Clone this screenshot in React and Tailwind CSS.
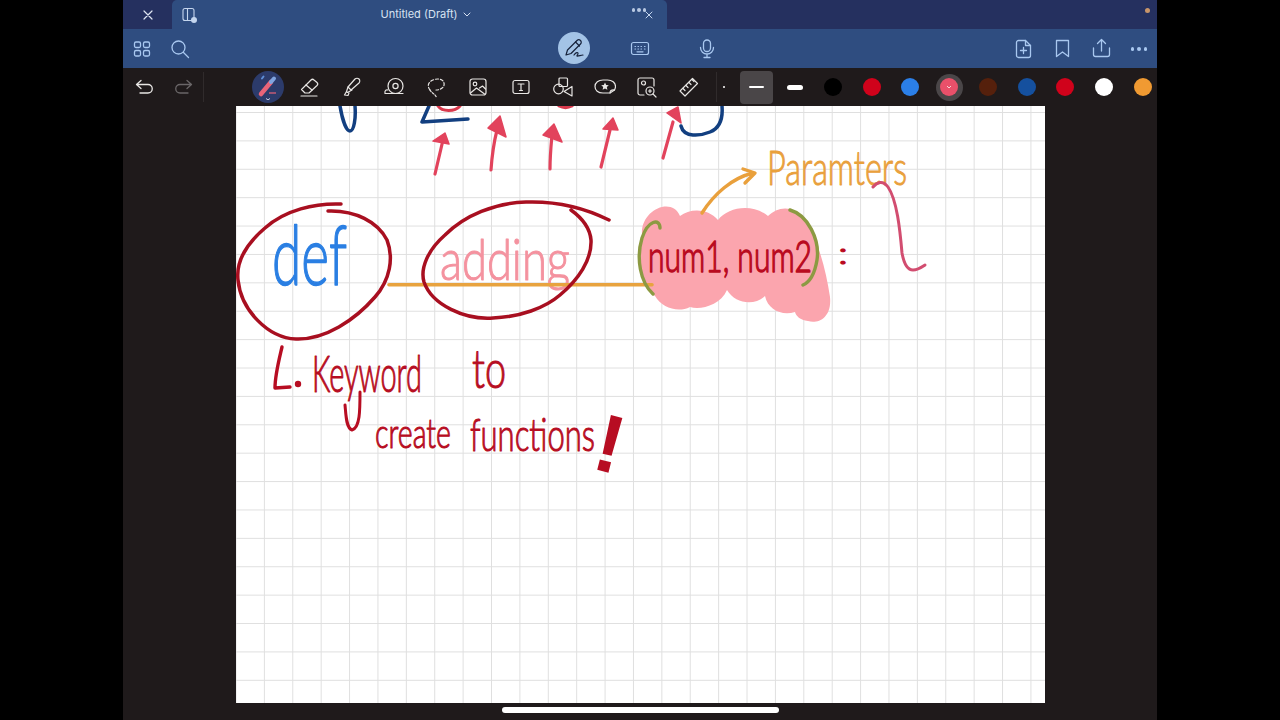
import React from "react";

const ink = { fill: "none", strokeLinecap: "round", strokeLinejoin: "round" };

function I({ w = 24, h = 24, c = "#a9c8f0", s = 1.6, children }) {
  return (
    <svg width={w} height={h} viewBox={`0 0 ${w} ${h}`} fill="none" stroke={c} strokeWidth={s} strokeLinecap="round" strokeLinejoin="round">
      {children}
    </svg>
  );
}

const W = "#e8e6e4";

function ToolIcon({ children }) {
  return <div className="w-[42.1px] h-[26px] flex items-center justify-center shrink-0">{children}</div>;
}

function Swatch({ color, ring }) {
  return (
    <div className="w-[38.75px] flex items-center justify-center shrink-0">
      {ring ? (
        <div className="w-[27px] h-[27px] rounded-full bg-[#4a4648] flex items-center justify-center">
          <div className="w-[18px] h-[18px] rounded-full flex items-center justify-center" style={{ background: color }}>
            <svg width="6" height="4" viewBox="0 0 6 4" fill="none" stroke="#f5d5d8" strokeWidth="1"><path d="M1 1l2 2 2-2" /></svg>
          </div>
        </div>
      ) : (
        <div className="w-[18px] h-[18px] rounded-full" style={{ background: color }} />
      )}
    </div>
  );
}

function Hand({ x, y, w, fs, sy, color, sw = 0.6, children }) {
  return (
    <text
      transform={`translate(${x} ${y}) scale(1 ${sy})`}
      textLength={w}
      lengthAdjust="spacingAndGlyphs"
      fontSize={fs}
      fill={color}
      stroke={color}
      strokeWidth={sw}
      strokeLinejoin="round"
      style={{ fontFamily: "Lato, 'Noto Sans', sans-serif", fontWeight: 300 }}
    >
      {children}
    </text>
  );
}

function Ink() {
  const red = "#b70d22";
  return (
    <svg className="absolute inset-0" width="809" height="597" viewBox="236 106 809 597">
      <path d="M642 235C640 210 672 196 680 216C690 208 708 208 718 220C728 207 752 203 768 216C778 206 795 204 806 222C818 240 826 270 830 297C832 318 818 324 808 321C800 320 796 316 795 312C782 316 768 310 765 296C755 306 735 304 727 290C720 306 700 310 690 307C678 313 662 308 655 296C640 285 636 260 642 235Z" fill="#fba5ae" />

      <g {...ink} stroke="#123f80" strokeWidth="3.5">
        <path d="M340 106C342 118 346 131 350 131C354 131 356 118 355 106" />
        <path d="M429 106L422 122L468 119" />
        <path d="M722 106C723 118 720 128 710 132C700 136 684 138 681 126" />
      </g>
      <path d="M438 106C442 112 455 112 460 106M559 106C563 108 568 108 572 106" {...ink} stroke="#d93a4d" strokeWidth="3" />
      <g {...ink} stroke="#e2435c" strokeWidth="3.2">
        <path d="M435 174L443 140" />
        <path d="M491 170C492 155 494 142 497 130" />
        <path d="M550 169C550 156 551 146 552 135" />
        <path d="M601 167L610 130" />
        <path d="M663 158L673 122" />
      </g>
      <g fill="#e2435c" stroke="#e2435c" strokeWidth="1.5" strokeLinejoin="round">
        <path d="M445 133L433 141L449 144Z" />
        <path d="M500 116L488 128L506 137Z" />
        <path d="M554 124L543 135L562 142Z" />
        <path d="M613 118L603 129L618 130Z" />
        <path d="M678 107L667 113L681 123Z" />
      </g>

      <Hand x={272} y={285} w={75} fs={46} sy={1.8} color="#2a7fe3" sw={0.8}>def</Hand>
      <Hand x={440} y={280} w={130} fs={37} sy={1.55} color="#f4929f" sw={0.7}>adding</Hand>

      <path d="M389 284.700H652" {...ink} stroke="#e8a33f" strokeWidth="3.600" />

      <g {...ink} stroke="#a80f20" strokeWidth="3.500">
        <path d="M341 204C315 203 285 210 265 228C245 245 236 262 238 280C241 310 268 338 296 339C325 340 355 320 375 297C390 280 394 258 387 240C378 222 355 210 328 211" />
        <path d="M609 220C585 208 555 201 526 202C495 203 465 215 445 235C428 250 420 268 424 282C432 305 465 320 493 318C520 317 545 308 560 295C578 280 592 260 591 240C590 228 582 218 571 210" />
      </g>

      <path d="M660 228C660 218 648 220 642 238C636 258 640 282 653 294M790 210C808 215 820 240 817 260C815 272 810 282 803 285" {...ink} stroke="#8c9a42" strokeWidth="3.400" />
      <Hand x={648} y={272} w={164} fs={30} sy={1.45} color="#b90a20" sw={1}>num1, num2</Hand>
      <Hand x={838} y={264} w={10} fs={30} sy={1} color="#b90a20" sw={1.2}>:</Hand>

      <path d="M702 213C714 194 732 178 753 173M743 169L755 173L745 183" {...ink} stroke="#e9a03c" strokeWidth="3.400" />
      <Hand x={767} y={185} w={140} fs={29} sy={1.65} color="#e9a03c">Paramters</Hand>

      <path d="M873 187C877 182 883 180 888 187C897 200 900 230 902 253C904 264 908 270 913 270C918 270 922 267 925 265" {...ink} stroke="#d24d70" strokeWidth="3" />

      <path d="M282 347C279 360 275 375 275 388L290 387" {...ink} stroke={red} strokeWidth="3.400" />
      <circle cx="298" cy="384" r="3.200" fill={red} />
      <path d="M360 392C360 410 360 428 352 430C346 428 346 415 345 405" {...ink} stroke={red} strokeWidth="3" />
      <Hand x={312} y={392} w={110} fs={28} sy={1.8} color={red}>Keyword</Hand>
      <Hand x={472} y={388} w={34} fs={30} sy={1.8} color={red}>to</Hand>
      <Hand x={375} y={448} w={76} fs={24} sy={1.75} color={red}>create</Hand>
      <Hand x={470} y={451} w={125} fs={26} sy={1.75} color={red}>functions</Hand>
      <text x="597" y="472" fontSize="82" fill={red} transform="rotate(14 610 440)" style={{ fontFamily: "'Liberation Sans', sans-serif", fontWeight: 700 }}>!</text>
    </svg>
  );
}

export default function App() {
  return (
    <div className="w-[1280px] h-[720px] bg-black flex justify-center overflow-hidden">
      <div className="w-[1034px] h-full bg-[#1f1a1b] flex flex-col">
        {/* title bar */}
        <div className="h-[29px] bg-[#25305f] flex shrink-0 relative">
          <div className="w-[49px] flex items-center justify-center">
            <I w={12} h={12} c="#dfe4f0" s={1.200}><path d="M2 2l8 8M10 2l-8 8" /></I>
          </div>
          <div className="w-[495px] bg-[#2f4d80] rounded-t-[5px] flex items-center relative">
            <div className="ml-[9px] mt-[1px] relative z-10">
              <I w={16} h={16} c="#c5d6ee" s={1.100}>
                <rect x="2" y="1.500" width="11" height="12" rx="2" />
                <path d="M6.500 1.500v12" />
              </I>
              <span className="absolute right-[0px] bottom-[0px] w-[6px] h-[6px] rounded-full bg-[#c5d6ee]" />
            </div>
            <div className="absolute left-0 right-0 flex items-center justify-center gap-[5px] text-[11px] text-[#d7e2f2] pl-[12px] font-['Inter',sans-serif]">
              <span>Untitled (Draft)</span>
              <I w={8} h={6} c="#d7e2f2" s={1}><path d="M1 1l3 3 3-3" /></I>
            </div>
            <div className="absolute right-[21px] top-[8px] flex items-center gap-[2px]">
              <span className="w-[3.500px] h-[3.500px] rounded-full bg-[#b8c8e2]" />
              <span className="w-[3.500px] h-[3.500px] rounded-full bg-[#b8c8e2]" />
              <span className="w-[3.500px] h-[3.500px] rounded-full bg-[#b8c8e2]" />
            </div>
            <div className="absolute right-[14px] top-[11px]">
              <I w={8} h={8} c="#c5d6ee" s={1}><path d="M1 1l6 6M7 1l-6 6" /></I>
            </div>
          </div>
          <div className="absolute right-[7px] top-[8px] w-[5px] h-[5px] rounded-full bg-[#c8956a]" />
        </div>

        {/* blue toolbar */}
        <div className="h-[39px] bg-[#2f4d80] flex items-center relative shrink-0">
          <div className="ml-[10px]">
            <I w={18} h={18} s={1.300}>
              <rect x="1.500" y="2" width="6" height="5.500" rx="1.500" />
              <rect x="10.500" y="2" width="6" height="5.500" rx="1.500" />
              <rect x="1.500" y="10.500" width="6" height="5.500" rx="1.500" />
              <rect x="10.500" y="10.500" width="6" height="5.500" rx="1.500" />
            </I>
          </div>
          <div className="ml-[19px]">
            <I w={20} h={20} s={1.300}>
              <circle cx="8.500" cy="8.500" r="6.500" />
              <path d="M13.500 13.500l5 5" />
            </I>
          </div>
          <div className="absolute left-[435px] top-[3px] w-[32px] h-[32px] rounded-full bg-[#a3c3e6] flex items-center justify-center">
            <I w={22} h={22} c="#17233c" s={1.200}>
              <path d="M3 18l1.500-5L14 3.500c1-1 2.500-1 3.500 0s1 2.500 0 3.500L8 16.500z" />
              <path d="M12.500 5l4 4" />
              <path d="M11 18c2-3 4-3 4-1.500s-1.500 2-1 2.500 3-.5 6-1" />
            </I>
          </div>
          <div className="absolute left-[507px] top-[12px]">
            <I w={20} h={15} s={1.200}>
              <rect x="1.500" y="1.500" width="17" height="12" rx="2" />
              <path d="M5 5.500h.5M8 5.500h.5M11 5.500h.5M14.500 5.500h.5M5 8h.5M8 8h.5M11 8h.5M14.500 8h.5M7 10.800h6" />
            </I>
          </div>
          <div className="absolute left-[575px] top-[10px]">
            <I w={18} h={20} s={1.300}>
              <rect x="5.500" y="1" width="7" height="11.500" rx="3.500" />
              <path d="M2.500 8.500c0 4 3 6.500 6.500 6.500s6.500-2.500 6.500-6.500M9 15v3M6 18.500h6" />
            </I>
          </div>
          <div className="absolute right-[124px] top-[10px]">
            <I w={18} h={20} s={1.300}>
              <path d="M3.500 1.500h7l5 5v10a2 2 0 0 1-2 2h-10a2 2 0 0 1-2-2v-13a2 2 0 0 1 2-2z" />
              <path d="M10.500 1.500v5h5M8.500 8.500v6M5.500 11.500h6" />
            </I>
          </div>
          <div className="absolute right-[87px] top-[10px]">
            <I w={15} h={19} s={1.300}><path d="M1.500 1.500h12v16l-6-4.500-6 4.500z" /></I>
          </div>
          <div className="absolute right-[46px] top-[9px]">
            <I w={19} h={20} s={1.300}>
              <path d="M9.500 13V2M5.500 5.500l4-4 4 4" />
              <path d="M1.500 10v6.500a2 2 0 0 0 2 2h12a2 2 0 0 0 2-2V10" />
            </I>
          </div>
          <div className="absolute right-[10px] top-[18px] flex gap-[3px]">
            <span className="w-[3.500px] h-[3.500px] rounded-full bg-[#a9c8f0]" />
            <span className="w-[3.500px] h-[3.500px] rounded-full bg-[#a9c8f0]" />
            <span className="w-[3.500px] h-[3.500px] rounded-full bg-[#a9c8f0]" />
          </div>
        </div>

        {/* dark tool row */}
        <div className="h-[38px] flex items-center shrink-0">
          <div className="w-[81px] h-[30px] flex items-center pl-[12px] gap-[18px] border-r border-[#302b2c] shrink-0">
            <I w={20} h={16} c={W} s={1.300}><path d="M6 1.500L1.500 5.500 6 9.500M1.500 5.500H13a4 4 0 0 1 0 8.500H5" /></I>
            <I w={20} h={16} c="#6a6668" s={1.300}><path d="M14 1.500l4.500 4-4.500 4M18.500 5.500H7a4 4 0 0 0 0 8.500h8" /></I>
          </div>
          <div className="ml-[48px] flex w-[32px] h-[32px] rounded-full bg-[#2c3b6b] items-center justify-center relative shrink-0">
            <svg width="24" height="28" viewBox="0 0 24 28" fill="none">
              <path d="M6 5.500l1.500-2" stroke="#5f8fd8" strokeWidth="2" strokeLinecap="round" />
              <path d="M5 21L15 9" stroke="#e96478" strokeWidth="4.500" strokeLinecap="round" />
              <path d="M15 9l3-3.500" stroke="#7fa4e0" strokeWidth="4" strokeLinecap="round" />
              <path d="M13 20h7" stroke="#e96478" strokeWidth="1.200" />
              <path d="M10 25.500l2 1.300 2-1.300" stroke="#d7dcec" strokeWidth="0.900" />
            </svg>
          </div>
          <div className="flex items-center ml-[5px] shrink-0">
            <ToolIcon>
              <I w={22} h={22} c={W} s={1.200}>
                <path d="M2.500 13.500L12 4c1-1 2-1 3 0l3 2.500c1 1 1 2 0 3L10 17H6z" />
                <path d="M7 9l6 5M2 20h16" />
              </I>
            </ToolIcon>
            <ToolIcon>
              <I w={22} h={22} c={W} s={1.200}>
                <path d="M7 11l7-8c1-1 3-1 4 0s1 3 0 4l-8 7z" />
                <path d="M7 11l-1.500 4.500 1 1 4.500-2.500M5.500 15.500l-2 3.500 3.500.5 1-2.500" />
              </I>
            </ToolIcon>
            <ToolIcon>
              <I w={22} h={22} c={W} s={1.200}>
                <circle cx="12.500" cy="10" r="7.500" />
                <circle cx="12.500" cy="10" r="2.600" />
                <path d="M2 17.500h18M2 17.500c-.5-3 1-4 3-3.500" />
              </I>
            </ToolIcon>
            <ToolIcon>
              <I w={22} h={22} c={W} s={1.200}>
                <path d="M5 14c-3-4-2-8 3-10 5-2 10-1 11 3 1 4-3 7-8 7" strokeDasharray="3 2" />
                <path d="M5 14c1 2 3 3 5 5l1.500 2" strokeDasharray="2 1.500" />
              </I>
            </ToolIcon>
            <ToolIcon>
              <I w={20} h={20} c={W} s={1.200}>
                <rect x="2" y="2" width="16" height="16" rx="2.500" />
                <path d="M2.500 16l6-5 8 6M11.500 11l3-2 3 3" />
                <circle cx="7" cy="7" r="1.800" />
              </I>
            </ToolIcon>
            <ToolIcon>
              <I w={20} h={16} c={W} s={1.200}>
                <rect x="2" y="1.500" width="16" height="13" rx="2" />
                <path d="M7 5h6M10 5v6.500M8.500 11.500h3" />
              </I>
            </ToolIcon>
            <ToolIcon>
              <I w={22} h={22} c={W} s={1.200}>
                <rect x="7" y="2" width="8.500" height="8.500" rx="1" />
                <circle cx="6.500" cy="13" r="4.800" />
                <path d="M20 10.500v9.500l-8-4.500z" />
              </I>
            </ToolIcon>
            <ToolIcon>
              <I w={22} h={20} c={W} s={1.200}>
                <path d="M16 16H9c-5 0-8-2.500-8-6.500S4.500 3 9 3h4.500c4.500 0 8 2.500 8 6.500 0 1.500-.5 2.500-1 3.500z" />
                <path d="M16 16c0-2 1-3.500 4.500-3" />
                <path d="M11 5.500l1.200 2.500 2.600.3-2 1.800.6 2.600-2.400-1.300-2.400 1.300.6-2.600-2-1.800 2.600-.3z" fill={W} stroke="none" />
              </I>
            </ToolIcon>
            <ToolIcon>
              <I w={22} h={22} c={W} s={1.200}>
                <path d="M8 19H4a2 2 0 0 1-2-2V4a2 2 0 0 1 2-2h12a2 2 0 0 1 2 2v6" />
                <circle cx="7.500" cy="7" r="2" />
                <circle cx="14" cy="15" r="4" />
                <path d="M17 18l3 3M12.500 15h3M14 13.500v3" />
              </I>
            </ToolIcon>
            <ToolIcon>
              <I w={22} h={22} c={W} s={1.200}>
                <path d="M2 15L14.500 2.500l5 5L7 20z" />
                <path d="M5 12.500l2 2M8 9.500l2 2M11 6.500l2 2M14 3.500l2 2" />
              </I>
            </ToolIcon>
          </div>
          <div className="w-px h-[30px] bg-[#302b2c] ml-[6px] shrink-0" />
          <div className="w-[14px] mr-[9px] flex items-center justify-center shrink-0">
            <span className="w-[2px] h-[2px] rounded-full bg-white" />
          </div>
          <div className="w-[33px] h-[33px] rounded-[4px] bg-[#4a4648] flex items-center justify-center shrink-0 mr-[4px]">
            <span className="w-[15px] h-[2px] rounded-full bg-white" />
          </div>
          <div className="w-[36px] mr-[0.6px] flex items-center justify-center shrink-0">
            <span className="w-[16px] h-[5px] rounded-full bg-white" />
          </div>
          <Swatch color="#000000" />
          <Swatch color="#d0021b" />
          <Swatch color="#2b7fe8" />
          <Swatch color="#e9506a" ring />
          <Swatch color="#55200c" />
          <Swatch color="#15509e" />
          <Swatch color="#d0021b" />
          <Swatch color="#ffffff" />
          <Swatch color="#f09a32" />
        </div>

        {/* canvas */}
        <div className="flex-1 flex justify-center min-h-0">
          <div
            className="w-[809px] h-[597px] bg-white relative overflow-hidden ml-[1px] bg-[linear-gradient(#dfdfdf_1px,transparent_1px),linear-gradient(90deg,#dfdfdf_1px,transparent_1px)] bg-[size:28.4px_28.4px] bg-[position:-0.5px_6px]"
          >
            <Ink />
          </div>
        </div>
        <div className="h-[17px] flex items-start justify-center shrink-0">
          <div className="w-[277px] h-[6px] mt-[4px] ml-[1px] rounded-full bg-white" />
        </div>
      </div>
    </div>
  );
}
